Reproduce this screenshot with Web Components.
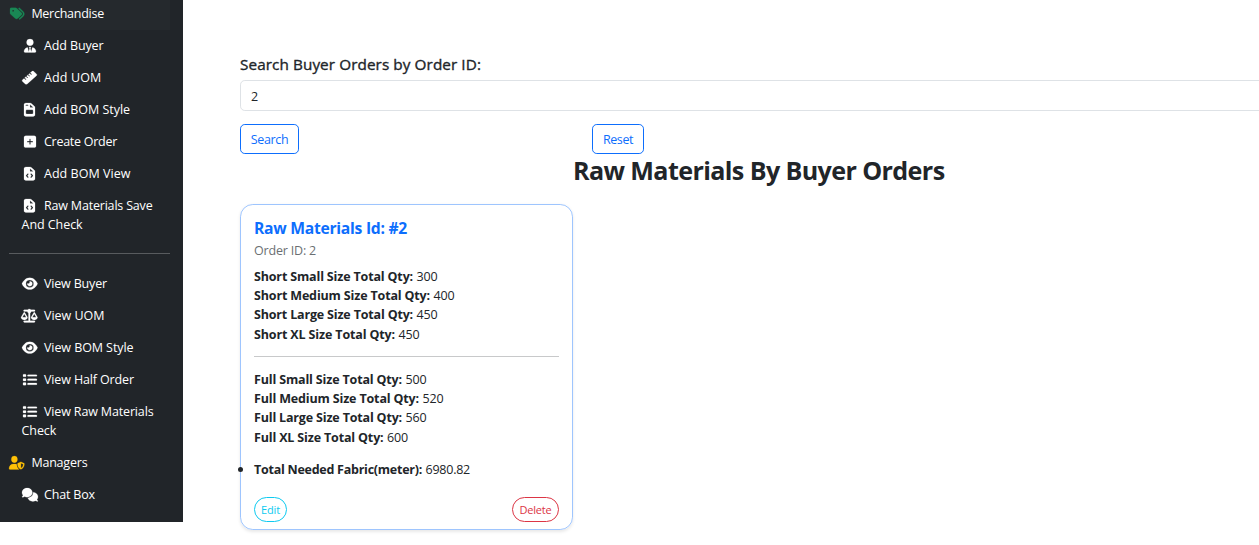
<!DOCTYPE html>
<html lang="en">
<head>
<meta charset="utf-8">
<title>Raw Materials By Buyer Orders</title>
<style>
html,body{margin:0;height:100%;overflow:hidden;background:#fff}
body{font:12.5px/19.2px "Open Sans","Noto Sans",sans-serif;color:#212529}
</style>
</head>
<body>
<app-shell></app-shell>
<script>
const file='M0 64C0 28.7 28.7 0 64 0H213.5c17 0 33.3 6.7 45.3 18.7L365.3 125.3c12 12 18.7 28.3 18.7 45.3V448c0 35.3-28.7 64-64 64H64c-35.3 0-64-28.7-64-64zM208 58.5V152c0 13.3 10.7 24 24 24H325.5z';
const ICONS={
tags:[512,14.4,'M345 39.1L472.8 168.4c52.4 53 52.4 138.2 0 191.2L360.8 472.9c-9.3 9.4-24.5 9.5-33.9 .2s-9.5-24.5-.2-33.9L438.6 325.9c33.9-34.3 33.9-89.4 0-123.7L310.9 72.9c-9.3-9.4-9.2-24.6 .2-33.9s24.6-9.2 33.9 .2zM0 229.5V80C0 53.5 21.5 32 48 32H197.5c17 0 33.3 6.7 45.3 18.7l168 168c25 25 25 65.5 0 90.5L277.3 442.7c-25 25-65.5 25-90.5 0l-168-168C6.7 262.7 0 246.5 0 229.5zM144 144a32 32 0 1 0 -64 0 32 32 0 1 0 64 0z'],
tie:[448,12,'M96 128a128 128 0 1 0 256 0A128 128 0 1 0 96 128zm94.5 200.2l18.6 31L175.8 483.1l-36-146.9c-2-8.1-9.8-13.4-17.9-11.3C51.9 342.4 0 405.8 0 481.3c0 17 13.8 30.7 30.7 30.7H417.3c17 0 30.7-13.8 30.7-30.7c0-75.5-51.9-138.9-121.9-156.4c-8.1-2-15.9 3.3-17.9 11.3l-36 146.9L238.9 359.2l18.6-31c6.4-10.7-1.3-24.2-13.7-24.2H204.3c-12.4 0-20.1 13.6-13.7 24.2z'],
ruler:[512,15,'M177.9 494.1c-18.7 18.7-49.1 18.7-67.9 0L17.9 401.9c-18.7-18.7-18.7-49.1 0-67.9l50.7-50.7 48 48c6.2 6.2 16.4 6.2 22.6 0s6.2-16.4 0-22.6l-48-48 41.4-41.4 48 48c6.2 6.2 16.4 6.2 22.6 0s6.2-16.4 0-22.6l-48-48 41.4-41.4 48 48c6.2 6.2 16.4 6.2 22.6 0s6.2-16.4 0-22.6l-48-48 41.4-41.4 48 48c6.2 6.2 16.4 6.2 22.6 0s6.2-16.4 0-22.6l-48-48 50.7-50.7c18.7-18.7 49.1-18.7 67.9 0l92.1 92.1c18.7 18.7 18.7 49.1 0 67.9L177.9 494.1z'],
invoice:[384,11,file+'M80 64h48c13 0 24 10 24 22s-11 22-24 22H80c-13 0-24-10-24-22s11-22 24-22zM104 256H280c22 0 40 18 40 40v88c0 22-18 40-40 40H104c-22 0-40-18-40-40v-88c0-22 18-40 40-40z'],
code:[384,11,file+'M153 289l-31 42 31 42c9.4 9.4 9.4 24.6 0 33.9s-24.6 9.4-33.9 0L71 348c-9.4-9.4-9.4-24.6 0-33.9l48-59c9.4-9.4 24.6-9.4 33.9 0s9.4 24.6 0 33.9zM265 255l48 59c9.4 9.4 9.4 24.6 0 33.9l-48 59c-9.4 9.4-24.6 9.4-33.9 0s-9.4-24.6 0-33.9l31-42-31-42c-9.4-9.4-9.4-24.6 0-33.9s24.6-9.4 33.9 0z'],
plus:[448,12,'M64 32C28.7 32 0 60.7 0 96V416c0 35.3 28.7 64 64 64H384c35.3 0 64-28.7 64-64V96c0-35.3-28.7-64-64-64H64zM200 344V280H136c-13.3 0-24-10.7-24-24s10.7-24 24-24h64V168c0-13.3 10.7-24 24-24s24 10.7 24 24v64h64c13.3 0 24 10.7 24 24s-10.7 24-24 24H248v64c0 13.3-10.7 24-24 24s-24-10.7-24-24z'],
eye:[576,15.5,'M288 32c-80.8 0-145.5 36.8-192.6 80.6C48.6 156 17.3 208 2.5 243.7c-3.3 7.9-3.3 16.7 0 24.6C17.3 304 48.6 356 95.4 399.4C142.5 443.2 207.2 480 288 480s145.5-36.8 192.6-80.6c46.8-43.5 78.1-95.4 93-131.1c3.3-7.9 3.3-16.7 0-24.6c-14.9-35.7-46.2-87.7-93-131.1C433.5 68.8 368.8 32 288 32zM144 256a144 144 0 1 1 288 0 144 144 0 1 1 -288 0zm144-64c0 35.3-28.7 64-64 64c-7.1 0-13.9-1.2-20.3-3.3c-5.5-1.8-11.9 1.6-11.7 7.4c.3 6.9 1.3 13.8 3.2 20.7c13.7 51.2 66.4 81.6 117.6 67.9s81.6-66.4 67.9-117.6c-11.1-41.5-47.8-69.4-88.6-71.1c-5.8-.2-9.2 6.1-7.4 11.7c2.1 6.4 3.3 13.2 3.3 20.3z'],
scale:[640,16.6,'M384 32H512c17.7 0 32 14.3 32 32s-14.3 32-32 32H398.4c-5.2 25.8-22.9 47.1-46.4 57.3V448H512c17.7 0 32 14.3 32 32s-14.3 32-32 32H320 128c-17.7 0-32-14.3-32-32s14.3-32 32-32H288V153.3c-23.5-10.3-41.2-31.6-46.4-57.3H128c-17.7 0-32-14.3-32-32s14.3-32 32-32H256c14.6-19.4 37.8-32 64-32s49.4 12.6 64 32zm55.6 288H584.4L512 195.8 439.6 320zM512 416c-62.9 0-115.2-34-126-78.9c-2.6-11 1-22.3 6.7-32.1l95.2-163.2c5-8.6 14.2-13.8 24.1-13.8s19.1 5.3 24.1 13.8l95.2 163.2c5.7 9.8 9.3 21.1 6.7 32.1C627.2 382 574.9 416 512 416zM126.8 195.8L54.4 320H199.3L126.8 195.8zM.9 337.1c-2.6-11 1-22.3 6.7-32.1l95.2-163.2c5-8.6 14.2-13.8 24.1-13.8s19.1 5.3 24.1 13.8l95.2 163.2c5.7 9.8 9.3 21.1 6.7 32.1C242 382 189.7 416 126.8 416S11.7 382 .9 337.1z'],
list:[512,14,'M24 48H88q24 0 24 24v48q0 24-24 24H24q-24 0-24-24V72q0-24 24-24zM24 208H88q24 0 24 24v48q0 24-24 24H24q-24 0-24-24V232q0-24 24-24zM24 368H88q24 0 24 24v48q0 24-24 24H24q-24 0-24-24V392q0-24 24-24zM192 64H480a32 32 0 0 1 0 64H192a32 32 0 0 1 0-64zM192 224H480a32 32 0 0 1 0 64H192a32 32 0 0 1 0-64zM192 384H480a32 32 0 0 1 0 64H192a32 32 0 0 1 0-64z'],
shield:[640,15.4,'M224 256A128 128 0 1 0 224 0a128 128 0 1 0 0 256zm-45.7 48C79.8 304 0 383.8 0 482.3C0 498.7 13.3 512 29.7 512H418.3c1.8 0 3.5-.2 5.3-.5c-76.3-55.1-99.8-141-103.1-200.2c-16.1-4.8-33.1-7.3-50.7-7.3H178.3zm308.8-78.3l-120 48C358 277.4 352 286.2 352 296c0 63.3 25.9 168.8 134.8 214.2c5.9 2.5 12.6 2.5 18.5 0C614.1 464.8 640 359.3 640 296c0-9.8-6-18.6-15.1-22.3l-120-48c-5.7-2.3-12.1-2.3-17.8 0zM591.4 312c-3.9 50.7-27.2 116.7-95.4 149.7V273.8L591.4 312z'],
chat:[640,16,'M208 352c114.9 0 208-78.8 208-176S322.9 0 208 0S0 78.8 0 176c0 38.6 14.7 74.3 39.6 103.4c-3.5 9.4-8.7 17.7-14.2 24.7c-4.8 6.2-9.7 11-13.3 14.3c-1.8 1.6-3.3 2.9-4.3 3.7c-.5 .4-.9 .7-1.1 .8l-.2 .2C1 327.2-1.4 334.4 .8 340.9S9.1 352 16 352c21.8 0 43.8-5.6 62.1-12.5c9.2-3.5 17.8-7.4 25.2-11.4C134.1 343.3 169.8 352 208 352zM448 176c0 112.3-99.1 196.9-216.5 207C255.8 457.4 336.4 512 432 512c38.2 0 73.9-8.7 104.7-23.9c7.5 4 16 7.9 25.2 11.4c18.3 6.9 40.3 12.5 62.1 12.5c6.9 0 13.1-4.5 15.2-11.1c2.1-6.6-.2-13.8-5.8-17.9l-.2-.2c-.2-.2-.6-.4-1.1-.8c-1-.8-2.5-2-4.3-3.7c-3.6-3.3-8.5-8.1-13.3-14.3c-5.5-7-10.7-15.4-14.2-24.7c24.9-29 39.6-64.7 39.6-103.4c0-92.8-84.9-168.9-192.6-175.5c.4 5.1 .6 10.3 .6 15.5z']
};
const define=(name,html,ready)=>customElements.define(name,class extends HTMLElement{
  connectedCallback(){
    if(this.shadowRoot)return;
    this.attachShadow({mode:'open'}).innerHTML=typeof html==='function'?html(this):html;
    if(ready)ready(this);
  }
});

define('ui-icon',el=>{
  const [vw,w,d]=ICONS[el.getAttribute('name')];
  return `<style>:host{display:inline-flex;width:16px;height:13px;justify-content:center;align-items:center;flex:none}svg{display:block;flex:none;overflow:visible}</style>
  <svg width="${w}" height="13.4" viewBox="0 0 ${vw} 512" preserveAspectRatio="none"><path fill="currentColor" stroke="currentColor" stroke-width="8" fill-rule="evenodd" d="${d}"/></svg>`;
});

/* Text run spaced to a measured width given in its w attribute. */
define('ui-text','<style>:host{display:inline-block;white-space:pre}</style><slot></slot>',el=>{
  const w=+el.getAttribute('w');
  if(w){
    const fit=()=>{
      el.style.letterSpacing='0';
      const n=el.getBoundingClientRect().width;
      if(n)el.style.letterSpacing=(w-n)/el.textContent.length+'px';
    };
    fit();
    if(document.fonts&&document.fonts.ready)document.fonts.ready.then(fit);
  }
});

define('nav-item',el=>`<style>
:host{display:block;padding:6.4px 0 6.4px 21.6px;color:#fff}
:host([top]){padding-left:9px}
:host([active]){background:#25292d}
.row{display:flex;align-items:center;height:19.2px;gap:6.4px}
ui-icon{color:${el.getAttribute('tint')||'#fff'}}
.more{height:19.2px}
</style><div class="row"><ui-icon name="${el.getAttribute('icon')}"></ui-icon><slot></slot></div>${el.querySelector('[slot=more]')?'<div class="more"><slot name="more"></slot></div>':''}`);

define('side-nav',`<style>
:host{display:block;box-sizing:border-box;width:183px;height:522px;flex:none;background:#212529;padding-right:13px;overflow:hidden}
nav{margin-top:-2.2px}
nav-item[active]{margin-bottom:-1px;padding-bottom:6.4px}
nav-item[active]+nav-item{margin-top:1px}
hr{border:0;height:1px;background:#585b5e;margin:11.8px 0 13.8px 9px}
</style><nav>
<nav-item top active icon="tags" tint="#198754"><ui-text w="72.5">Merchandise</ui-text></nav-item>
<nav-item icon="tie"><ui-text w="59.5">Add Buyer</ui-text></nav-item>
<nav-item icon="ruler"><ui-text w="57.5">Add UOM</ui-text></nav-item>
<nav-item icon="invoice"><ui-text w="86">Add BOM Style</ui-text></nav-item>
<nav-item icon="plus"><ui-text w="73">Create Order</ui-text></nav-item>
<nav-item icon="code"><ui-text w="86.5">Add BOM View</ui-text></nav-item>
<nav-item icon="code"><ui-text w="108.5">Raw Materials Save</ui-text><ui-text slot="more" w="61">And Check</ui-text></nav-item>
<hr>
<nav-item icon="eye"><ui-text w="63">View Buyer</ui-text></nav-item>
<nav-item icon="scale"><ui-text w="60.5">View UOM</ui-text></nav-item>
<nav-item icon="eye"><ui-text w="89.5">View BOM Style</ui-text></nav-item>
<nav-item icon="list"><ui-text w="90">View Half Order</ui-text></nav-item>
<nav-item icon="list"><ui-text w="109.5">View Raw Materials</ui-text><ui-text slot="more" w="34.5">Check</ui-text></nav-item>
<nav-item top icon="shield" tint="#ffc107"><ui-text w="56">Managers</ui-text></nav-item>
<nav-item icon="chat"><ui-text w="51">Chat Box</ui-text></nav-item>
</nav>`);

define('ui-button',`<style>
:host{display:inline-flex;box-sizing:border-box;align-items:center;justify-content:center;height:30px;padding-top:1.4px;border:1px solid currentColor;border-radius:4.8px;color:#0d6efd}
:host([pill]){height:25px;padding-top:0;border-radius:12.8px;font-size:11px}
:host([kind=info]){color:#0dcaf0}
:host([kind=danger]){color:#dc3545}
</style><slot></slot>`);

define('order-search',`<style>
:host{display:block}
h2{margin:0;font-size:15.3px;line-height:20px;font-weight:500;height:26px;-webkit-text-stroke:.35px currentColor}
.field{box-sizing:border-box;width:1040px;height:31px;border:1px solid #dee2e6;border-radius:4.8px;padding:8px 10px 6px;display:flex;align-items:center}
.actions{display:grid;grid-template-columns:352px 352px;margin-top:13px;justify-items:start}
</style><h2><ui-text w="241">Search Buyer Orders by Order ID:</ui-text></h2>
<div class="field"><ui-text w="7">2</ui-text></div>
<div class="actions"><ui-button style="width:59px"><ui-text w="37.5">Search</ui-text></ui-button><ui-button style="width:52px"><ui-text w="30">Reset</ui-text></ui-button></div>`);

define('qty-line',el=>`<style>:host{display:flex;gap:3.5px;height:19.3px;line-height:19.3px;align-items:center}b{font-weight:700}</style>
<b><ui-text w="${el.getAttribute('w')}">${el.getAttribute('label')}:</ui-text></b><ui-text w="${el.getAttribute('vw')||21}">${el.getAttribute('value')}</ui-text>`);

define('material-card',`<style>
:host{display:block;box-sizing:border-box;width:333px;height:326px;border:1px solid #9ec5fe;border-radius:12.8px;padding:13px;box-shadow:0 1.6px 3.2px rgba(0,0,0,.09)}
h3{margin:0;font-size:15.7px;line-height:20px;height:22px;color:#0d6efd;font-weight:700}
.sub{color:#6b6f73;height:19px;padding-top:1px;margin-bottom:6.8px}
hr{border:0;height:1px;background:#c8c9ca;margin:11.6px 0 13.3px}
ul{margin:12.5px 0 12.8px;padding:0}
li{display:list-item;list-style:none;position:relative}
li::before{content:"";position:absolute;left:-16px;top:7.5px;width:5px;height:5px;border-radius:50%;background:#212529}
.foot{display:flex;justify-content:space-between;margin-top:18px}
</style>
<h3><ui-text w="153">Raw Materials Id: #2</ui-text></h3>
<div class="sub"><ui-text w="62">Order ID: 2</ui-text></div>
<qty-line label="Short Small Size Total Qty" w="159" value="300"></qty-line>
<qty-line label="Short Medium Size Total Qty" w="176" value="400"></qty-line>
<qty-line label="Short Large Size Total Qty" w="159" value="450"></qty-line>
<qty-line label="Short XL Size Total Qty" w="141" value="450"></qty-line>
<hr>
<qty-line label="Full Small Size Total Qty" w="148" value="500"></qty-line>
<qty-line label="Full Medium Size Total Qty" w="165" value="520"></qty-line>
<qty-line label="Full Large Size Total Qty" w="148" value="560"></qty-line>
<qty-line label="Full XL Size Total Qty" w="129.5" value="600"></qty-line>
<ul><li><qty-line label="Total Needed Fabric(meter)" w="168" value="6980.82" vw="44.5"></qty-line></li></ul>
<div class="foot"><ui-button pill kind="info" style="width:33px"><ui-text w="19">Edit</ui-text></ui-button><ui-button pill kind="danger" style="width:47px"><ui-text w="32">Delete</ui-text></ui-button></div>`);

define('app-shell',`<style>
:host{display:flex;height:545px;overflow:hidden}
main{flex:1;min-width:0;padding:54px 0 0 57px;overflow:hidden}
h1{margin:0 0 0 333px;font-size:25.1px;line-height:32px;height:50px;font-weight:700}
</style><side-nav></side-nav><main><order-search></order-search><h1><ui-text w="371.5">Raw Materials By Buyer Orders</ui-text></h1><material-card></material-card></main>`);
</script>
</body>
</html>
